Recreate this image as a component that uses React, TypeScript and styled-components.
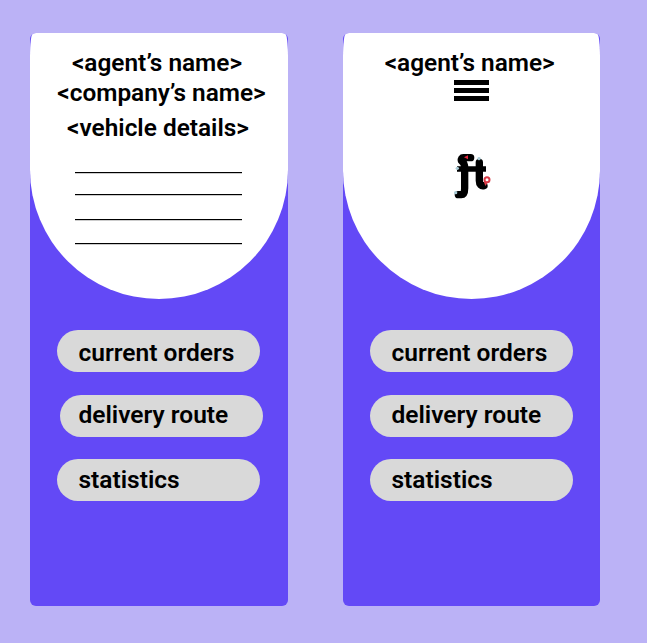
import React from "react";
import styled, { createGlobalStyle } from "styled-components";

const GlobalStyle = createGlobalStyle`
  * { box-sizing: border-box; }
  body {
    margin: 0;
    background: #bbb2f6;
    font-family: Roboto, "Liberation Sans", sans-serif;
    color: #000;
  }
`;

const Page = styled.main`
  display: flex;
  gap: 55px;
  height: 643px;
  padding: 33px 0 0 30px;
`;

const Card = styled.section<{ $width?: number }>`
  width: ${(p) => p.$width ?? 258}px;
  height: 573px;
  border-radius: 6px;
  background: #6349f6;
  overflow: hidden;
`;

const Header = styled.header`
  display: flex;
  flex-direction: column;
  align-items: center;
  height: 266px;
  padding-top: 15px;
  background: #fff;
  border-radius: 3px 3px 129px 129px / 24px 24px 129px 129px;
`;

const Title = styled.h2<{ $gap?: number; $shift?: number }>`
  margin: ${(p) => p.$gap ?? 0}px 0 0 ${(p) => p.$shift ?? 0}px;
  font-size: 24.4px;
  font-weight: 600;
  line-height: 30px;
  white-space: nowrap;
`;

const Rules = styled.div`
  display: flex;
  flex-direction: column;
  width: 167px;
  margin: 29px 1px 0 0;
`;

const Rule = styled.div<{ $gap: number }>`
  height: 1px;
  margin-top: ${(p) => p.$gap}px;
  background: #000;
  box-shadow: 0 1px 0 #ccc;
`;

const MenuButton = styled.button`
  display: flex;
  flex-direction: column;
  gap: 3px;
  width: 35px;
  margin: 2px 0 0 0;
  padding: 0;
  border: 0;
  background: none;
`;

const MenuBar = styled.span`
  height: 5px;
  background: #000;
`;

const Logo = styled.svg`
  display: block;
  width: 55px;
  height: 60px;
  margin: 44px 0 0 1px;
`;

const Actions = styled.nav`
  display: flex;
  flex-direction: column;
  gap: 22.4px;
  padding: 31.4px 0 0 27px;
`;

const Action = styled.button<{ $indent?: number; $nudge?: number }>`
  width: 203px;
  height: 42px;
  margin: 0 0 0 ${(p) => p.$indent ?? 0}px;
  padding: ${(p) => Math.max(p.$nudge ?? 0, 0)}px 0 ${(p) => Math.max(-(p.$nudge ?? 0), 0)}px
    ${(p) => 21.5 - (p.$indent ?? 0)}px;
  border: 0;
  border-radius: 21px;
  background: #d9d9d9;
  color: #000;
  font: 600 24.5px/30px Roboto, "Liberation Sans", sans-serif;
  text-align: left;
  white-space: nowrap;
`;

function FtLogo() {
  return (
    <Logo viewBox="0 0 165 180" role="img" aria-label="ft">
      <g fill="none" stroke="#000" strokeLinejoin="round">
        <path d="M77 38H55Q48 38 49 47Q59 54 59 68V130Q59 149 49 149H40" strokeWidth="22" strokeLinecap="round" />
        <path d="M36 72h87" strokeWidth="16" />
        <path d="M103 52v55c0 12 6 17 14 15" strokeWidth="22" strokeLinecap="round" />
      </g>
      <path d="M57 37l12-6v12z" fill="#e5263e" />
      <g fill="#a9cbd6">
        <circle cx="102" cy="41" r="5" />
        <circle cx="37" cy="70" r="5" />
        <circle cx="32" cy="143" r="5" />
      </g>
      <path d="M116 109l5 14 9-12z" fill="#d93a46" />
      <circle cx="126" cy="104" r="7.5" fill="#fff" stroke="#d93a46" strokeWidth="6" />
    </Logo>
  );
}

function ActionList({ offset = 0 }: { offset?: number }) {
  return (
    <Actions>
      <Action $nudge={4}>current orders</Action>
      <Action $indent={offset} $nudge={-1}>delivery route</Action>
      <Action>statistics</Action>
    </Actions>
  );
}

export default function App() {
  return (
    <>
      <GlobalStyle />
      <Page>
        <Card>
          <Header>
            <Title $shift={-4}>&lt;agent’s name&gt;</Title>
            <Title $shift={5}>&lt;company’s name&gt;</Title>
            <Title $gap={5} $shift={-2}>&lt;vehicle details&gt;</Title>
            <Rules>
              <Rule $gap={0} />
              <Rule $gap={21} />
              <Rule $gap={24} />
              <Rule $gap={23} />
            </Rules>
          </Header>
          <ActionList offset={3} />
        </Card>
        <Card $width={257.4}>
          <Header>
            <Title $shift={-4}>&lt;agent’s name&gt;</Title>
            <MenuButton aria-label="Menu">
              <MenuBar />
              <MenuBar />
              <MenuBar />
            </MenuButton>
            <FtLogo />
          </Header>
          <ActionList />
        </Card>
      </Page>
    </>
  );
}
